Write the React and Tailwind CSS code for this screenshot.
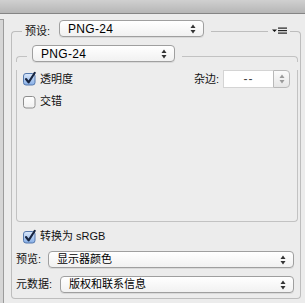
import React from 'react';

const font = { fontFamily: '"Liberation Sans", "Noto Sans CJK SC", sans-serif' };

function Arrows({ color = '#333' }) {
    return (
        <svg width="6" height="10" viewBox="0 0 6 10">
            <path d="M3 0.5 L5.5 4 L0.5 4 Z" fill={color} />
            <path d="M3 9.5 L5.5 6 L0.5 6 Z" fill={color} />
        </svg>
    );
}

function Popup({ label, className = '', bold }) {
    return (
        <div className={`h-[17px] flex items-center justify-between pl-[8px] pr-[7px] rounded-[4px] border border-[#9f9f9f] bg-gradient-to-b from-white to-[#f1f1f1] shadow-[0_1px_0_rgba(0,0,0,0.08)] ${className}`}>
            <span className={`text-black leading-none ${bold ? 'text-[12px] tracking-[0.3px]' : 'text-[11px]'}`}>{label}</span>
            <Arrows />
        </div>
    );
}

function MenuIcon() {
    return (
        <svg width="15" height="8" viewBox="0 0 15 8" className="mt-[7px]">
            <path d="M0 2.5 H5 L2.5 5 Z" fill="#111" />
            <rect x="6" y="0.5" width="9" height="1.2" fill="#222" />
            <rect x="6" y="3" width="9" height="1.2" fill="#222" />
            <rect x="6" y="5.5" width="9" height="1.2" fill="#222" />
        </svg>
    );
}

function Checkbox({ checked }) {
    return (
        <svg width="14" height="14" viewBox="0 0 14 14" className="shrink-0 overflow-visible">
            <defs>
                <linearGradient id="cbBlue" x1="0" y1="0" x2="0" y2="1">
                    <stop offset="0" stopColor="#dce9fb" />
                    <stop offset="1" stopColor="#86aee6" />
                </linearGradient>
                <linearGradient id="cbWhite" x1="0" y1="0" x2="0" y2="1">
                    <stop offset="0" stopColor="#ffffff" />
                    <stop offset="1" stopColor="#f0f0f0" />
                </linearGradient>
            </defs>
            <rect x="0.5" y="1.5" width="11.5" height="11.5" rx="2.5"
                fill={checked ? 'url(#cbBlue)' : 'url(#cbWhite)'}
                stroke={checked ? '#5679ad' : '#8e8e8e'} />
            {checked && (
                <path d="M3 7 L5.6 10.4 L11.8 0.8" fill="none" stroke="#17243f" strokeWidth="2.1" strokeLinecap="round" strokeLinejoin="round" />
            )}
        </svg>
    );
}

export default function App() {
    return (
        <div className="w-[305px] h-[303px] overflow-hidden bg-[#ececec] flex flex-col text-[11px] text-[#111]" style={font}>
            {/* title bar */}
            <div className="h-[14px] shrink-0 bg-gradient-to-b from-[#d0d0d0] to-[#b6b6b6] border-b border-[#858585]" />

            <div className="flex flex-1">
                {/* left panel edge */}
                <div className="w-[4px] mt-[5px] bg-[#d6d6d6] border-t border-r border-[#9c9c9c] shrink-0" />

                <div className="ml-[7px] w-[290px] flex flex-col">
                    {/* outer group header */}
                    <div className="flex items-start mt-[6px] h-[17px]">
                        <div className="w-[11px] h-[6px] mt-[11px] border-t border-l border-[#bdbdbd] rounded-tl-[4px]" />
                        <span className="ml-[3px] mt-[5px] leading-[13px]">预设:</span>
                        <Popup label="PNG-24" bold className="ml-[9px] w-[145px]" />
                        <div className="flex-1 ml-[7px] mr-[4px] mt-[11px] border-t border-[#bdbdbd]" />
                        <MenuIcon />
                        <div className="w-[11px] h-[6px] ml-[3px] mt-[11px] border-t border-r border-[#bdbdbd] rounded-tr-[4px]" />
                    </div>

                    {/* outer group body */}
                    <div className="border-l border-r border-b border-[#bdbdbd] rounded-b-[4px] pl-[4px] pr-[2px] pb-[5px]">
                        {/* inner group header */}
                        <div className="flex items-start mt-[8px] h-[17px]">
                            <div className="w-[11px] h-[6px] mt-[11px] border-t border-l border-[#c2c2c2] rounded-tl-[4px]" />
                            <Popup label="PNG-24" bold className="ml-[5px] w-[143px]" />
                            <div className="flex-1 ml-[7px] mt-[11px] border-t border-[#c2c2c2]" />
                            <div className="w-[6px] h-[6px] mt-[11px] border-t border-r border-[#c2c2c2] rounded-tr-[4px]" />
                        </div>
                        <div className="h-[152px] border-l border-r border-b border-[#c2c2c2] rounded-b-[4px] pl-[6px] pr-[7px] bg-[#ededed]">
                            <div className="flex items-center mt-[8px] h-[18px]">
                                <Checkbox checked />
                                <span className="ml-[3px]">透明度</span>
                                <span className="ml-auto">杂边:</span>
                                <div className="ml-[4px] flex h-[18px]">
                                    <div className="w-[50px] bg-white border-t border-l border-b border-[#d4d4d4] flex items-center justify-center text-[#444] tracking-[1px] text-[12px]">--</div>
                                    <div className="w-[17px] rounded-r-[4px] border border-[#b9b9b9] bg-gradient-to-b from-[#fbfbfb] to-[#e6e6e6] flex items-center justify-center">
                                        <Arrows color="#9a9a9a" />
                                    </div>
                                </div>
                            </div>
                            <div className="flex items-center mt-[7px] h-[13px]">
                                <Checkbox />
                                <span className="ml-[3px]">交错</span>
                            </div>
                        </div>

                        <div className="flex items-center mt-[8px] h-[13px] ml-[7px]">
                            <Checkbox checked />
                            <span className="ml-[3px]">转换为 sRGB</span>
                        </div>
                        <div className="flex items-center mt-[8px]">
                            <span className="w-[32px]">预览:</span>
                            <Popup label="显示器颜色" className="w-[246px]" />
                        </div>
                        <div className="flex items-center mt-[8px]">
                            <span className="w-[44px]">元数据:</span>
                            <Popup label="版权和联系信息" className="w-[234px]" />
                        </div>
                    </div>

                    {/* next group header */}
                    <div className="flex items-start mt-[2px] h-[17px]">
                        <div className="w-[11px] h-[6px] mt-[11px] border-t border-l border-[#bdbdbd] rounded-tl-[4px]" />
                        <span className="ml-[3px] mt-[5px] leading-[13px]">颜色表</span>
                        <div className="flex-1 ml-[7px] mr-[4px] mt-[11px] border-t border-[#bdbdbd]" />
                        <MenuIcon />
                        <div className="w-[11px] h-[6px] ml-[3px] mt-[11px] border-t border-r border-[#bdbdbd] rounded-tr-[4px]" />
                    </div>
                </div>
            </div>
        </div>
    );
}
